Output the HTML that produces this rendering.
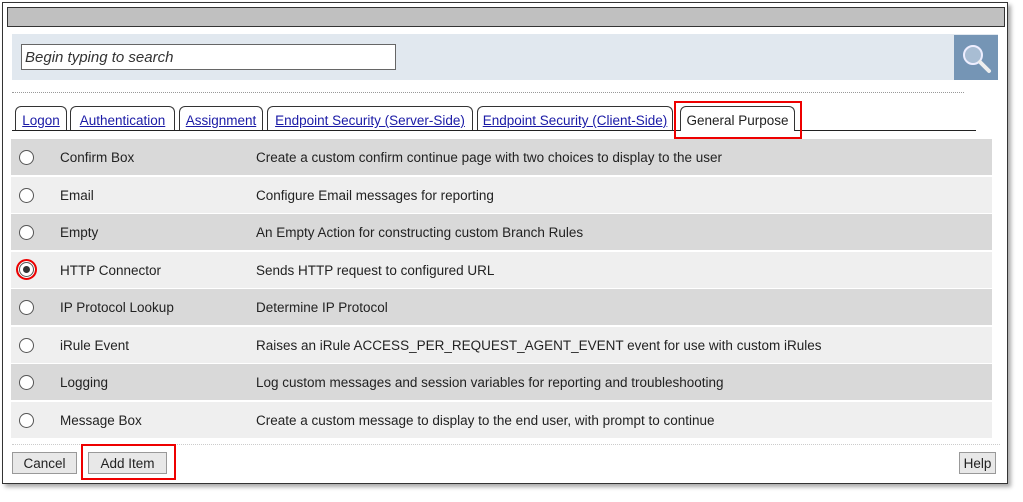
<!DOCTYPE html>
<html><head><style>
body{margin:0;width:1023px;height:502px;background:#fff;position:relative;overflow:hidden;font-family:"Liberation Sans",Arial,sans-serif;font-size:13.5px;color:#222}
.a{position:absolute}
.row{position:absolute;left:11px;width:981px;height:36px}
.row .r{position:absolute;left:8px;top:11px;width:13px;height:13px;border:1px solid #555;border-radius:50%;background:#fff}
.row .n{position:absolute;left:49px;top:11px}
.row .d{position:absolute;left:245px;top:11px}
.tab{position:absolute;top:106px;height:24px;border:1px solid #333;border-bottom:none;border-radius:6px 6px 0 0;background:#fff;color:#1a1aa6;text-decoration:underline;line-height:27px;font-size:13.5px;text-align:center;box-sizing:border-box;white-space:nowrap}
.btn{position:absolute;top:452px;height:20px;border:1px solid #999;background:#e8e8e8;line-height:21px;text-align:center;font-size:13.5px}
</style></head><body>
<div class="a" style="left:2px;top:2px;width:1004px;height:480px;border:1px solid #333;box-shadow:3px 3px 4px #aaa"></div>
<div class="a" style="left:7px;top:7px;width:996px;height:18px;background:#c0c0c0;border:1px solid #333"></div>
<div class="a" style="left:12px;top:34px;width:986px;height:46px;background:#e1e8ef"></div>
<div class="a" style="left:21px;top:44px;height:26px;border:1px solid #666;background:#fff;font-style:italic;line-height:26px;padding-left:3px;box-sizing:border-box;width:375px;font-size:15px;color:#333">Begin typing to search</div>
<div class="a" style="left:954px;top:35px;width:44px;height:45px;background:#7595b5"></div>
<svg class="a" style="left:954px;top:35px" width="44" height="45"><circle cx="19" cy="20" r="9" fill="#a8bdd3" stroke="#eef" stroke-width="2"/><line x1="26" y1="27" x2="35" y2="36" stroke="#eee" stroke-width="4" stroke-linecap="round"/></svg>
<div class="a" style="left:12px;top:92px;width:952px;border-top:1px dotted #999"></div>
<div class="tab" style="left:15px;width:52px">Logon</div>
<div class="tab" style="left:70px;width:105px">Authentication</div>
<div class="tab" style="left:179px;width:84px">Assignment</div>
<div class="tab" style="left:267px;width:206px">Endpoint Security (Server-Side)</div>
<div class="tab" style="left:477px;width:196px">Endpoint Security (Client-Side)</div>
<div class="a" style="left:12px;top:130px;width:964px;border-top:1px solid #222"></div>
<div class="tab" style="left:680px;width:115px;color:#222;text-decoration:none;height:25px;z-index:2">General Purpose</div>
<div class="a" style="left:674px;top:101px;width:128px;height:38px;border:2px solid #e00;box-sizing:border-box;z-index:3"></div>
<div class="row" style="top:139px;background:#d9d9d9"><div class="r"></div><div class="n">Confirm Box</div><div class="d">Create a custom confirm continue page with two choices to display to the user</div></div>
<div class="row" style="top:177px;background:#efefef"><div class="r"></div><div class="n">Email</div><div class="d">Configure Email messages for reporting</div></div>
<div class="row" style="top:214px;background:#d9d9d9"><div class="r"></div><div class="n">Empty</div><div class="d">An Empty Action for constructing custom Branch Rules</div></div>
<div class="row" style="top:252px;background:#efefef"><div class="r" style="border:2px solid #e00;left:5px;top:7px;width:17px;height:17px;box-shadow:inset 0 0 0 1px #fff,inset 0 0 0 2px #555,inset 0 0 0 5px #fff;background:#333"></div><div class="n">HTTP Connector</div><div class="d">Sends HTTP request to configured URL</div></div>
<div class="row" style="top:289px;background:#d9d9d9"><div class="r"></div><div class="n">IP Protocol Lookup</div><div class="d">Determine IP Protocol</div></div>
<div class="row" style="top:327px;background:#efefef"><div class="r"></div><div class="n">iRule Event</div><div class="d">Raises an iRule ACCESS_PER_REQUEST_AGENT_EVENT event for use with custom iRules</div></div>
<div class="row" style="top:364px;background:#d9d9d9"><div class="r"></div><div class="n">Logging</div><div class="d">Log custom messages and session variables for reporting and troubleshooting</div></div>
<div class="row" style="top:402px;background:#efefef"><div class="r"></div><div class="n">Message Box</div><div class="d">Create a custom message to display to the end user, with prompt to continue</div></div>
<div class="a" style="left:12px;top:444px;width:988px;border-top:1px dotted #ccc"></div>
<div class="btn" style="left:12px;width:63px">Cancel</div>
<div class="btn" style="left:88px;width:77px">Add Item</div>
<div class="a" style="left:81px;top:444px;width:95px;height:36px;border:2px solid #e00;box-sizing:border-box"></div>
<div class="btn" style="left:959px;width:35px">Help</div>
</body></html>
